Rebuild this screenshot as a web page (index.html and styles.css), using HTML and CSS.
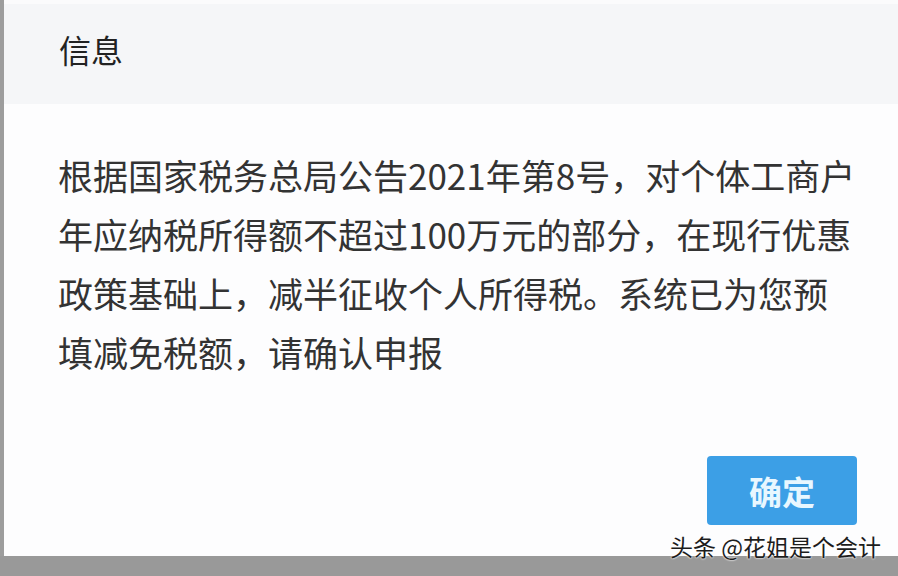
FILE: index.html
```html
<!DOCTYPE html>
<html lang="zh-CN">
<head>
<meta charset="utf-8">
<title>信息</title>
<link rel="stylesheet" href="styles.css">
</head>
<body>
<div class="screen">
  <div class="row">
    <div class="edge"></div>
    <div class="dialog">
      <div class="dialog-head">信息</div>
      <div class="dialog-body">
        <p class="message">根据国家税务总局公告2021年第8号，对个体工商户年应纳税所得额不超过100万元的部分，在现行优惠政策基础上，减半征收个人所得税。系统已为您预填减免税额，请确认申报</p>
      </div>
      <div class="dialog-foot">
        <button class="btn-ok">确定</button>
      </div>
    </div>
  </div>
  <div class="bottom-band"></div>
  <div class="watermark">头条 @花姐是个会计</div>
</div>
</body>
</html>
```

FILE: styles.css
```css
html, body {
  margin: 0;
  padding: 0;
}
body {
  width: 898px;
  height: 576px;
  overflow: hidden;
  font-family: "Noto Sans CJK SC", "Noto Sans", sans-serif;
  background: #ffffff;
}
.screen {
  position: relative;
  width: 898px;
  height: 576px;
  display: flex;
  flex-direction: column;
}
.row {
  flex: 1;
  display: flex;
  min-height: 0;
}
.edge {
  width: 4px;
  background: #9d9d9d;
}
.dialog {
  flex: 1;
  display: flex;
  flex-direction: column;
  background: #fdfdfe;
}
.dialog-head {
  height: 104px;
  box-sizing: border-box;
  border-top: 4px solid #fbfbfc;
  padding: 21px 0 0 55px;
  background: #f5f6f8;
  font-size: 32px;
  line-height: 48px;
  color: #222222;
}
.dialog-body {
  flex: 1;
  padding: 41px 0 0 54px;
}
.message {
  margin: 0;
  width: 802px;
  font-size: 35px;
  line-height: 59px;
  color: #333333;
}
.dialog-foot {
  display: flex;
  justify-content: flex-end;
  padding: 0 41px 31px 0;
}
.btn-ok {
  width: 150px;
  height: 69px;
  border: none;
  border-radius: 4px;
  background: #3c9fe6;
  color: #e8f7ff;
  font-family: "Noto Sans CJK SC", sans-serif;
  font-size: 33px;
  font-weight: 700;
  padding: 0;
}
.bottom-band {
  height: 20px;
  background: #999999;
}
.watermark {
  position: absolute;
  right: 17px;
  bottom: 17px;
  font-size: 23px;
  line-height: 26px;
  color: #1c1c1c;
  text-shadow: 0 0 2px #ffffff, 0 0 2px #ffffff;
}
```
